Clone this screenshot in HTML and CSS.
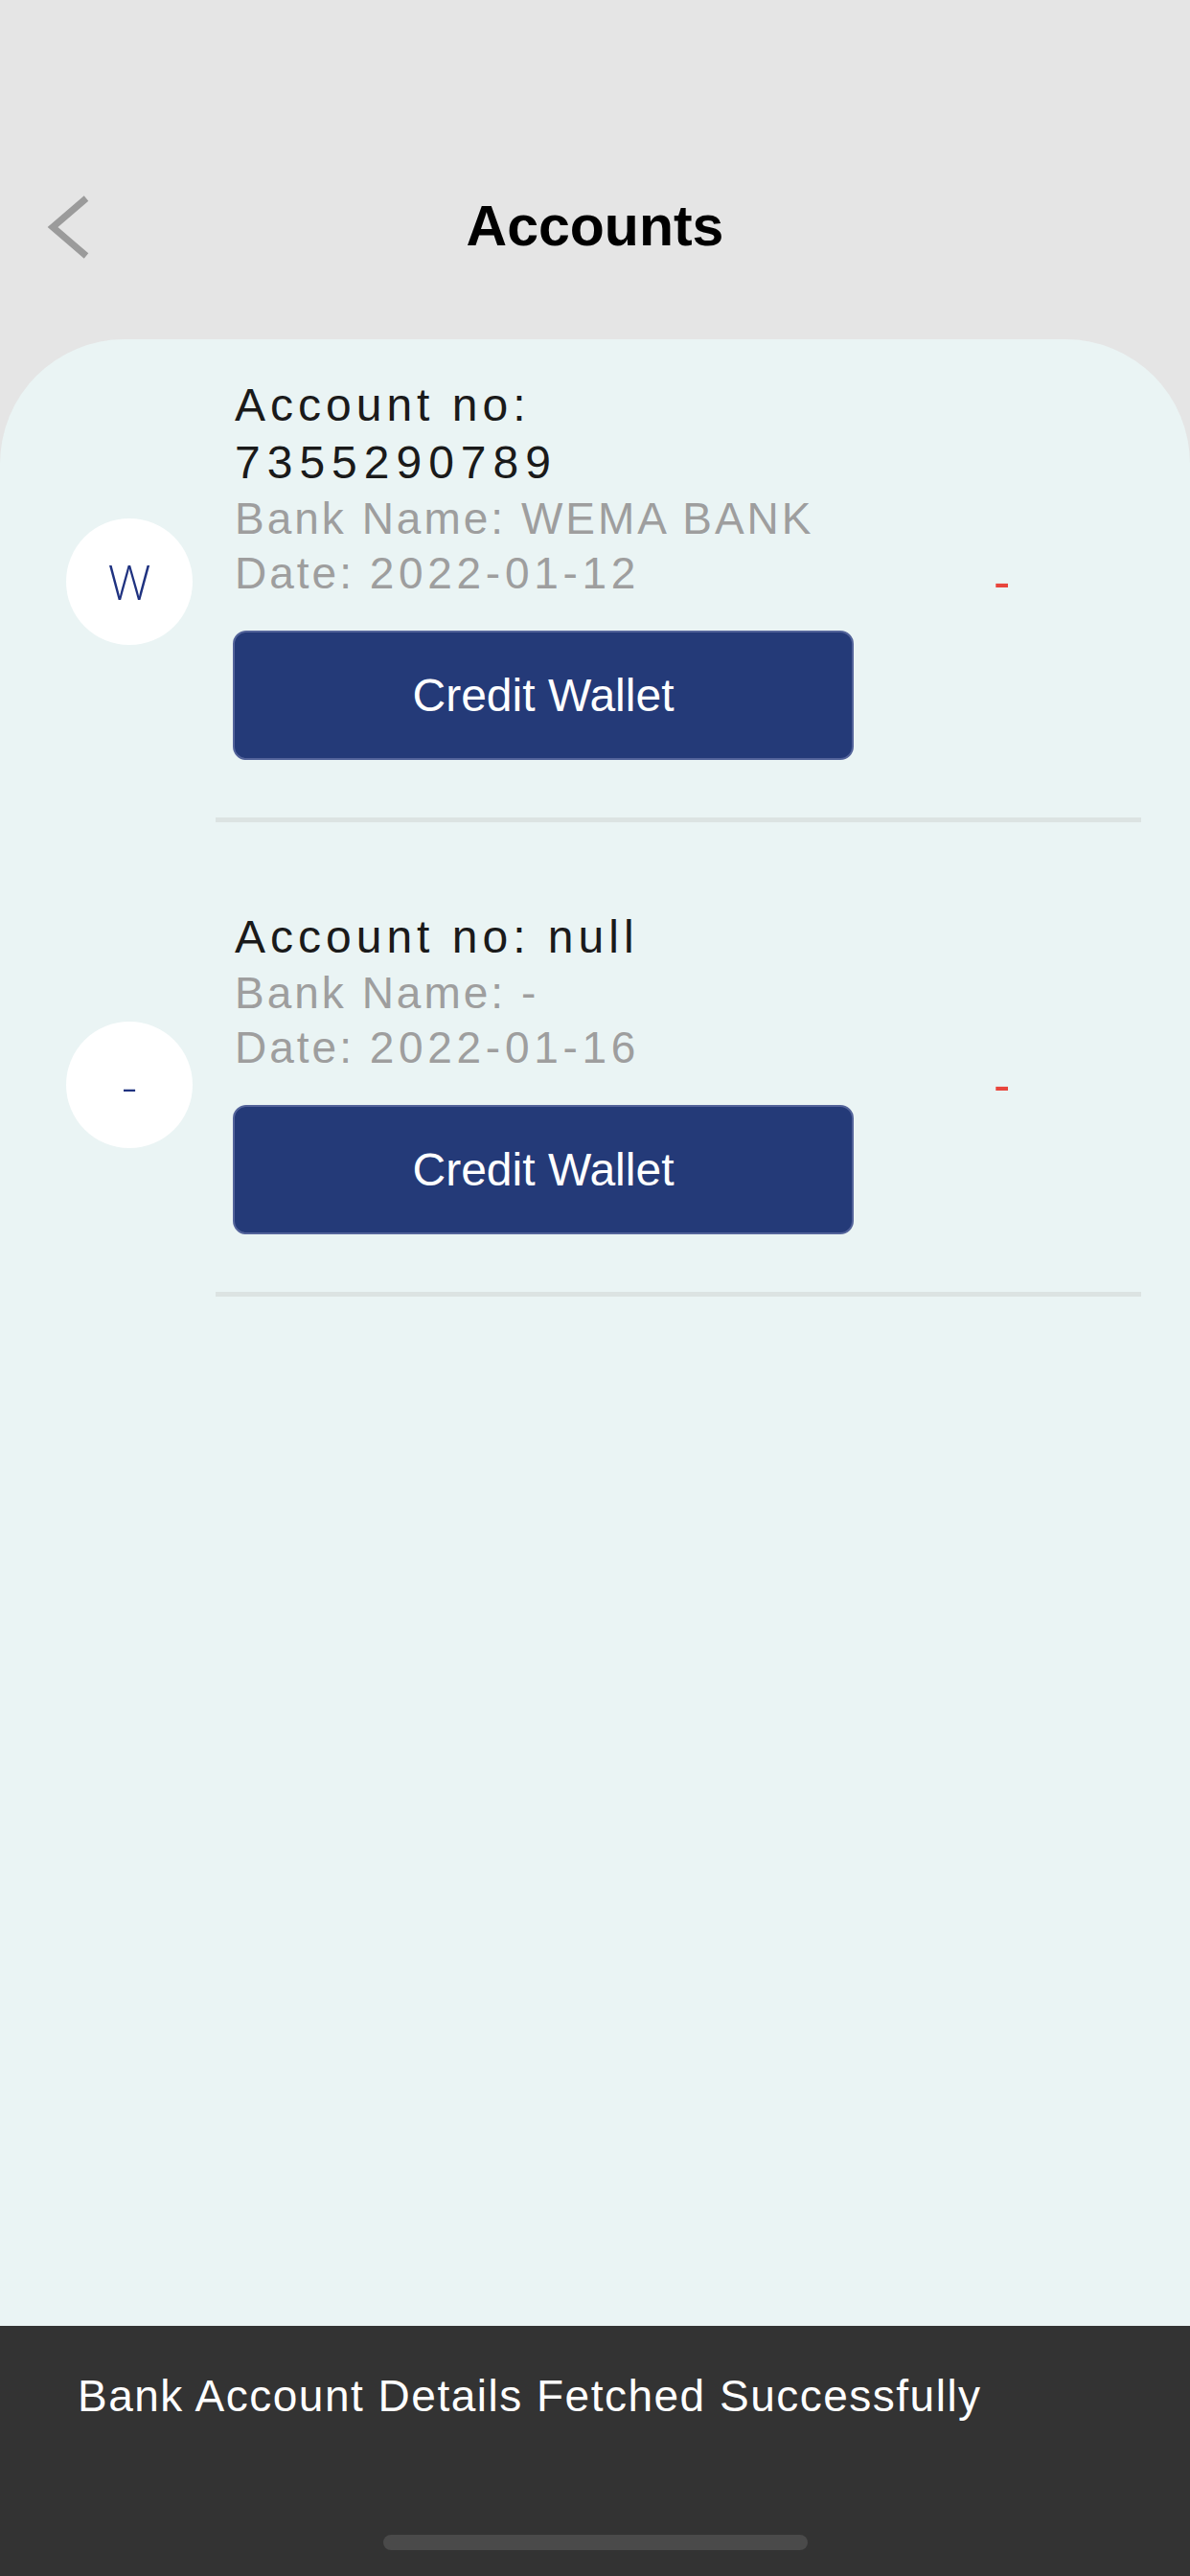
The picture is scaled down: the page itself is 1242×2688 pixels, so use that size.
FILE: index.html
```html
<!DOCTYPE html>
<html lang="en">
<head>
<meta charset="utf-8">
<title>Accounts</title>
<link rel="stylesheet" href="styles.css">
</head>
<body>
<div class="screen">
  <header class="header">
    <div class="nav">
      <div class="nav-left">
        <svg class="back" width="60" height="80" viewBox="0 0 60 80" aria-hidden="true">
          <path d="M50 11 L15 41 L50 71" fill="none" stroke="#9b9b9b" stroke-width="7"/>
        </svg>
      </div>
      <h1 class="title">Accounts</h1>
      <div class="nav-right"></div>
    </div>
  </header>

  <main class="card">
    <section class="item">
      <div class="row">
        <div class="avatar">W</div>
        <div class="info">
          <div class="acct">Account no: <span class="num">7355290789</span></div>
          <div class="meta">Bank Name: WEMA BANK</div>
          <div class="meta">Date: <span class="num">2022-01-12</span></div>
          <button class="btn">Credit Wallet</button>
        </div>
        <div class="status">-</div>
      </div>
      <div class="sep"></div>
    </section>

    <section class="item">
      <div class="row">
        <div class="avatar">-</div>
        <div class="info">
          <div class="acct">Account no: null</div>
          <div class="meta">Bank Name: -</div>
          <div class="meta">Date: <span class="num">2022-01-16</span></div>
          <button class="btn">Credit Wallet</button>
        </div>
        <div class="status">-</div>
      </div>
      <div class="sep"></div>
    </section>
  </main>

  <div class="snackbar">
    <p class="snack-text">Bank Account Details Fetched Successfully</p>
    <div class="home-indicator"></div>
  </div>
</div>
</body>
</html>
```

FILE: styles.css
```css
* { box-sizing: border-box; }

html, body {
  margin: 0;
  padding: 0;
}

body {
  width: 1242px;
  height: 2688px;
  overflow: hidden;
  background: #e5e5e5;
  font-family: "Liberation Sans", Arial, sans-serif;
}

.screen {
  position: relative;
  width: 1242px;
  height: 2688px;
  display: flex;
  flex-direction: column;
}

.header {
  height: 354px;
  padding-top: 180px;
}

.nav {
  height: 112px;
  display: grid;
  grid-template-columns: 1fr auto 1fr;
  align-items: center;
}

.nav-left {
  padding-left: 40px;
  display: flex;
  align-items: center;
}

.back { display: block; }

.title {
  margin: 0;
  font-size: 59px;
  font-weight: 700;
  color: #000;
  line-height: 66px;
}

.card {
  flex: 1;
  background: #eaf4f4;
  border-radius: 130px 130px 0 0;
  padding-top: 39px;
}

.item + .item { margin-top: 90px; }

.row {
  display: flex;
  align-items: center;
  padding-left: 69px;
}

.avatar {
  width: 132px;
  height: 132px;
  border-radius: 50%;
  background: #ffffff;
  color: #1f3280;
  font-family: "Open Sans", "Liberation Sans", sans-serif;
  font-weight: 300;
  font-size: 50px;
  display: flex;
  align-items: center;
  justify-content: center;
  flex-shrink: 0;
}

.info {
  margin-left: 42px;
  width: 648px;
  padding-bottom: 28px;
}

.acct {
  width: 625px;
  padding-left: 2px;
  font-size: 48px;
  line-height: 60px;
  letter-spacing: 5px;
  color: #1a1a1a;
}

.acct .num { letter-spacing: 7px; }

.meta {
  padding-left: 2px;
  font-size: 46px;
  line-height: 57px;
  letter-spacing: 3px;
  color: #9e9e9e;
}

.meta .num { letter-spacing: 4.7px; }

.btn {
  display: block;
  margin-top: 31px;
  width: 648px;
  height: 135px;
  border: 2px solid #53639a;
  border-radius: 14px;
  background: #243a78;
  color: #ffffff;
  font-family: "Liberation Sans", Arial, sans-serif;
  font-size: 48px;
  padding: 0;
}

.status {
  margin-left: 146px;
  color: #e8453c;
  font-size: 52px;
  line-height: 50px;
}

.sep {
  margin-top: 32px;
  margin-left: 225px;
  width: 966px;
  height: 5px;
  background: #dce3e2;
}

.snackbar {
  position: absolute;
  left: 0;
  bottom: 0;
  width: 1242px;
  height: 261px;
  background: #333333;
  padding: 43px 0 0 81px;
}

.snack-text {
  margin: 0;
  color: #ffffff;
  font-size: 46px;
  line-height: 60px;
  letter-spacing: 1.5px;
}

.home-indicator {
  position: absolute;
  left: 400px;
  top: 218px;
  width: 443px;
  height: 16px;
  border-radius: 8px;
  background: #4a4a4a;
}
```
